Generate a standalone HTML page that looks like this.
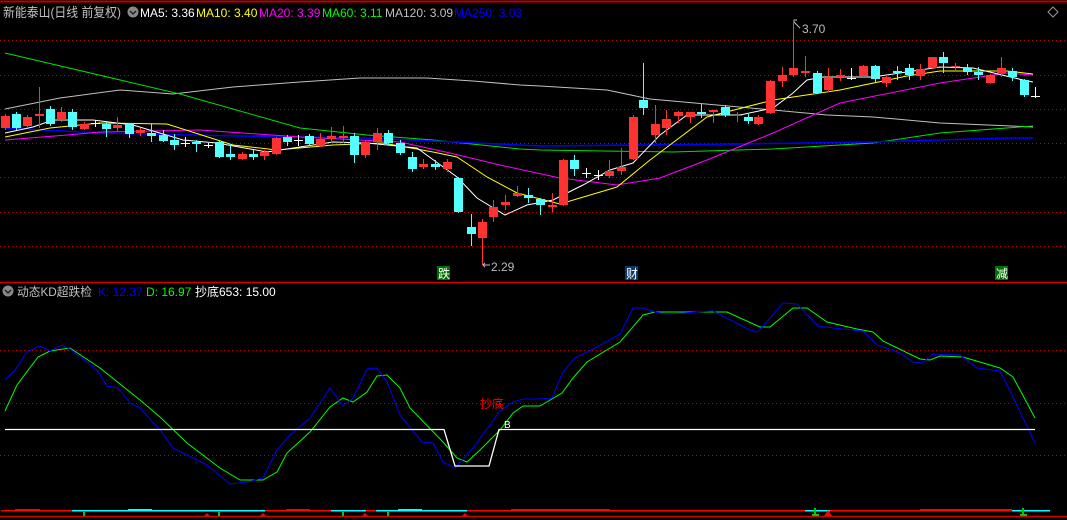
<!DOCTYPE html>
<html><head><meta charset="utf-8"><style>
html,body{margin:0;padding:0;background:#000;width:1067px;height:520px;overflow:hidden}
svg{display:block}
text{font-family:"Liberation Sans","Noto Sans CJK SC",sans-serif}
</style></head><body>
<svg id="s" width="1067" height="520" xmlns="http://www.w3.org/2000/svg">
<rect width="1067" height="520" fill="#000"/>
<line x1="0" y1="1.5" x2="1067" y2="1.5" stroke="#c00000" stroke-width="2"/>
<g stroke="#c00000" stroke-dasharray="1,3" stroke-width="1">
<line x1="0" y1="40.5" x2="1067" y2="40.5"/><line x1="0" y1="75.5" x2="1067" y2="75.5"/>
<line x1="0" y1="109.5" x2="1067" y2="109.5"/><line x1="0" y1="143.5" x2="1067" y2="143.5"/>
<line x1="0" y1="177.5" x2="1067" y2="177.5"/><line x1="0" y1="212.5" x2="1067" y2="212.5"/>
<line x1="0" y1="246.5" x2="1067" y2="246.5"/>
<line x1="0" y1="350.5" x2="1067" y2="350.5"/><line x1="0" y1="403.5" x2="1067" y2="403.5"/>
<line x1="0" y1="455.5" x2="1067" y2="455.5"/>
</g>
<line x1="0" y1="282.5" x2="1067" y2="282.5" stroke="#d00000" stroke-width="1.5"/>
<line x1="0" y1="516.5" x2="1067" y2="516.5" stroke="#d00000" stroke-width="1.5"/>
<g id="ma" fill="none" stroke-width="1"></g>
<g id="cd"></g>
<g id="kd" fill="none" stroke-width="1"></g>
<polyline points="5,429.5 444,429.5 455,466 489,466 499,429.5 1035,429.5" fill="none" stroke="#fff" stroke-width="1.3"/>
<text x="3" y="17" font-size="13" fill="#c0c0c0" textLength="118" lengthAdjust="spacingAndGlyphs">新能泰山(日线 前复权)</text>
<circle cx="133" cy="12" r="5.5" fill="#888"/><path d="M130,11 l3,3 l3,-3" stroke="#222" stroke-width="1.5" fill="none"/>
<text x="140" y="17" font-size="12" fill="#fff">MA5: 3.36</text>
<text x="196" y="17" font-size="12" fill="#ffff00">MA10: 3.40</text>
<text x="259" y="17" font-size="12" fill="#ff00ff">MA20: 3.39</text>
<text x="322" y="17" font-size="12" fill="#00ff00">MA60: 3.11</text>
<text x="385" y="17" font-size="12" fill="#c0c0c0">MA120: 3.09</text>
<text x="454" y="17" font-size="12" fill="#0000ff">MA250: 3.03</text>
<path d="M1053,7 l5,5 l-5,5 l-5,-5z" fill="none" stroke="#999"/>
<path d="M794,23 v-3 h3 M794,22 l6,6" stroke="#bbb" fill="none"/>
<text x="802" y="33" font-size="12" fill="#bbb">3.70</text>
<path d="M490,265 h-7 M485,263 l-2,2 l2,2" stroke="#bbb" fill="none"/>
<text x="491" y="271" font-size="12" fill="#bbb">2.29</text>
<rect x="437" y="266" width="13" height="14" fill="#007000"/><text x="438" y="278" font-size="12" fill="#fff">跌</text>
<rect x="625" y="266" width="13" height="14" fill="#0a3a6a"/><text x="626" y="278" font-size="12" fill="#fff">财</text>
<rect x="995" y="266" width="13" height="14" fill="#007000"/><text x="996" y="278" font-size="12" fill="#fff">减</text>
<circle cx="8" cy="291" r="5.5" fill="#888"/><path d="M5,290 l3,3 l3,-3" stroke="#222" stroke-width="1.5" fill="none"/>
<text x="17" y="296" font-size="12" fill="#c0c0c0" textLength="75" lengthAdjust="spacingAndGlyphs">动态KD超跌检</text>
<text x="98" y="296" font-size="12" fill="#0000ff">K: 12.37</text>
<text x="146" y="296" font-size="12" fill="#00ff00">D: 16.97</text>
<text x="195" y="296" font-size="12" fill="#fff">抄底653: 15.00</text>
<text x="480" y="408" font-size="12" fill="#ff0000">抄底</text>
<text x="504" y="428" font-size="10" fill="#fff">B</text>
<g id="bt"></g>
</svg>
<script>
var NS="http://www.w3.org/2000/svg";
function el(p,t,a){var e=document.createElementNS(NS,t);for(var k in a)e.setAttribute(k,a[k]);document.getElementById(p).appendChild(e);return e}
function pl(p,c,pts,w){el(p,"polyline",{points:pts,stroke:c,"stroke-width":w||1,fill:"none"})}
pl("ma","#c0c0c0","5,109 60,98 120,90 173,94 233,87 300,82 360,78 427,78 473,81 520,85 540,86 607,90 650,99 773,110 827,115 873,117 940,123 1033,127");
pl("ma","#00e000","5,53 180,94 300,128 367,135 433,140 520,149 540,150 673,152 773,149 873,143 940,133 1033,126");
pl("ma","#0000ff","5,128 100,133 240,136 367,138 520,145 540,146 740,144 873,142 1007,138 1033,138",1.5);
pl("ma","#ff00ff","5,140 67,135 100,132 200,130 300,137 400,142 450,153 500,165 560,178 617,185 660,178 707,160 773,133 840,103 940,83 1007,73 1033,75");
pl("ma","#ffff00","5,137 50,128 100,123 167,124 233,145 277,150 333,145 383,143 433,152 457,157 487,177 517,193 560,204 617,187 650,160 707,117 773,100 840,90 907,76 940,71 1007,71 1033,74");
pl("ma","#ffffff","5,133 33,127 53,120 93,120 133,125 183,140 217,143 267,152 300,147 333,142 367,143 417,148 457,177 477,198 505,215 527,205 553,200 583,185 610,170 633,163 660,135 687,115 740,115 773,108 793,93 807,80 823,77 873,77 940,67 973,68 1023,80 1033,82");
var C=[[5,116,128,114,130,'r'],[16,114,128,112,130,'c'],[27,117,126,115,127,'r'],[39,114,116,87,128,'r'],[50,109,124,106,126,'c'],[61,112,120,107,122,'r'],[72,112,127,109,130,'c'],[84,124,129,122,130,'r'],[95,123,123,120,127,'w'],[106,124,129,122,137,'c'],[117,125,128,117,132,'r'],[129,124,134,123,138,'c'],[140,130,133,128,136,'r'],[151,133,136,124,142,'c'],[163,135,141,130,142,'c'],[174,140,145,134,150,'c'],[185,143,143,137,147,'w'],[196,142,144,140,152,'c'],[208,145,145,143,148,'w'],[219,142,157,140,158,'c'],[230,154,157,144,160,'c'],[242,154,159,152,160,'r'],[253,154,157,150,160,'c'],[264,152,156,150,160,'r'],[276,138,154,137,155,'r'],[287,137,142,135,146,'c'],[298,140,140,135,146,'w'],[309,136,144,134,146,'c'],[320,139,146,133,147,'r'],[331,136,139,127,143,'r'],[343,136,138,126,143,'r'],[354,136,155,133,163,'c'],[365,142,155,140,158,'r'],[377,133,142,128,150,'r'],[388,133,143,130,145,'c'],[400,143,153,140,155,'c'],[412,157,169,152,172,'c'],[423,164,167,159,169,'r'],[435,164,167,160,170,'c'],[447,162,169,159,172,'r'],[458,178,212,177,213,'c'],[471,227,234,214,246,'c'],[482,222,238,219,265,'r'],[493,207,217,200,222,'r'],[505,202,205,195,210,'r'],[517,193,196,186,197,'r'],[528,195,198,188,203,'c'],[540,199,205,198,215,'c'],[552,205,207,193,212,'r'],[563,160,205,159,206,'r'],[574,160,169,155,176,'c'],[586,173,173,168,178,'w'],[598,175,175,170,180,'w'],[609,171,176,160,178,'r'],[621,167,171,148,175,'r'],[633,117,159,115,160,'r'],[643,100,108,63,115,'c'],[655,124,135,105,143,'r'],[666,119,128,110,135,'r'],[678,112,116,111,123,'r'],[690,112,117,112,123,'r'],[701,112,114,104,118,'c'],[713,110,112,110,123,'r'],[725,107,115,105,117,'c'],[737,115,116,112,122,'r'],[748,117,121,114,124,'c'],[758,117,124,115,125,'r'],[770,81,113,80,114,'r'],[782,75,81,67,87,'r'],[793,68,75,23,77,'r'],[805,71,73,56,77,'r'],[817,73,93,71,93,'c'],[828,78,90,68,92,'r'],[840,75,77,69,81,'r'],[851,78,78,68,80,'w'],[863,66,76,65,77,'r'],[875,66,79,65,82,'c'],[886,77,83,75,87,'r'],[897,71,73,66,80,'c'],[909,68,75,64,80,'c'],[920,69,76,64,80,'r'],[932,57,68,57,69,'r'],[943,57,63,52,73,'c'],[955,66,67,63,70,'r'],[967,68,72,64,75,'c'],[978,72,75,67,80,'c'],[990,75,83,74,84,'r'],[1001,68,73,57,77,'r'],[1012,71,77,68,81,'c'],[1024,80,95,79,97,'c'],[1035,96,96,87,98,'w']];
C.forEach(function(c){var col=c[5]=='r'?'#ff3232':c[5]=='c'?'#54ffff':'#ffffff';
el("cd","line",{x1:c[0]+.5,x2:c[0]+.5,y1:c[3],y2:c[4],stroke:col});
if(c[5]=='w')el("cd","line",{x1:c[0]-4,x2:c[0]+5,y1:c[1]+.5,y2:c[1]+.5,stroke:col});
else el("cd","rect",{x:c[0]-4,y:c[1],width:9,height:Math.max(1,c[2]-c[1]),fill:col});});
pl("kd","#00ff00","5,411 17,385 38,357 50,351 70,348 100,368 140,400 160,417 187,443 220,468 240,480 263,480 277,472 287,453 310,432 330,407 343,398 353,402 367,392 377,376 387,375 400,388 410,408 443,442 457,458 467,462 480,450 500,430 513,413 523,406 540,406 562,393 573,378 587,362 620,342 643,315 655,312 727,312 760,327 770,327 793,308 807,308 827,322 857,329 873,332 883,341 920,359 930,360 940,356 963,357 1000,368 1013,377 1035,418");
pl("kd","#0000ff","5,380 15,370 27,352 40,346 50,351 62,345 70,349 97,370 107,386 118,388 130,403 140,408 160,430 173,448 187,455 207,465 230,484 247,482 263,478 277,450 290,435 310,418 330,388 343,406 353,398 367,369 377,368 387,382 400,415 422,442 433,443 443,462 455,468 473,448 500,411 513,402 523,399 540,399 552,398 563,372 575,358 597,347 620,334 633,308 643,308 655,312 667,314 713,311 750,330 758,332 783,303 797,304 818,326 833,328 863,331 877,345 900,353 913,362 922,363 933,354 960,355 977,368 1000,371 1013,397 1035,443");
var B=[[1,15,'#f00',1],[15,40,'#f00',2],[40,72,'#f00',1],[72,128,'#0ff',1],[128,152,'#0ff',2],[152,265,'#0ff',1],[265,286,'#f00',1],[286,310,'#f00',2],[310,331,'#f00',1],[331,366,'#0ff',1],[366,376,'#f00',1],[376,398,'#0ff',1],[398,422,'#0ff',2],[422,467,'#0ff',1],[467,511,'#f00',1],[511,540,'#f00',2],[540,553,'#f00',2],[553,610,'#f00',2],[610,700,'#f00',1],[700,805,'#f00',1],[805,830,'#0ff',1],[830,920,'#f00',1],[920,1012,'#f00',2],[1012,1050,'#0ff',1]];
B.forEach(function(b){el("bt","rect",{x:b[0],y:511-b[3],width:b[1]-b[0],height:b[3]+0.5,fill:b[2]})});
[83,218,342,387].forEach(function(x){el("bt","rect",{x:x,y:512,width:2,height:4,fill:"#00cc00"})});
[207,263,365,465].forEach(function(x){el("bt","path",{d:"M"+(x-3)+",516 l3,-3 l3,3z",fill:"#f00"})});
el("bt","path",{d:"M815,508 v7 M812,515 h7 M1023,508 v7 M1020,515 h7",stroke:"#00cc00","stroke-width":2});
el("bt","path",{d:"M824,516 l4,-6 l4,6z",fill:"#f00"});
</script>
</body></html>
